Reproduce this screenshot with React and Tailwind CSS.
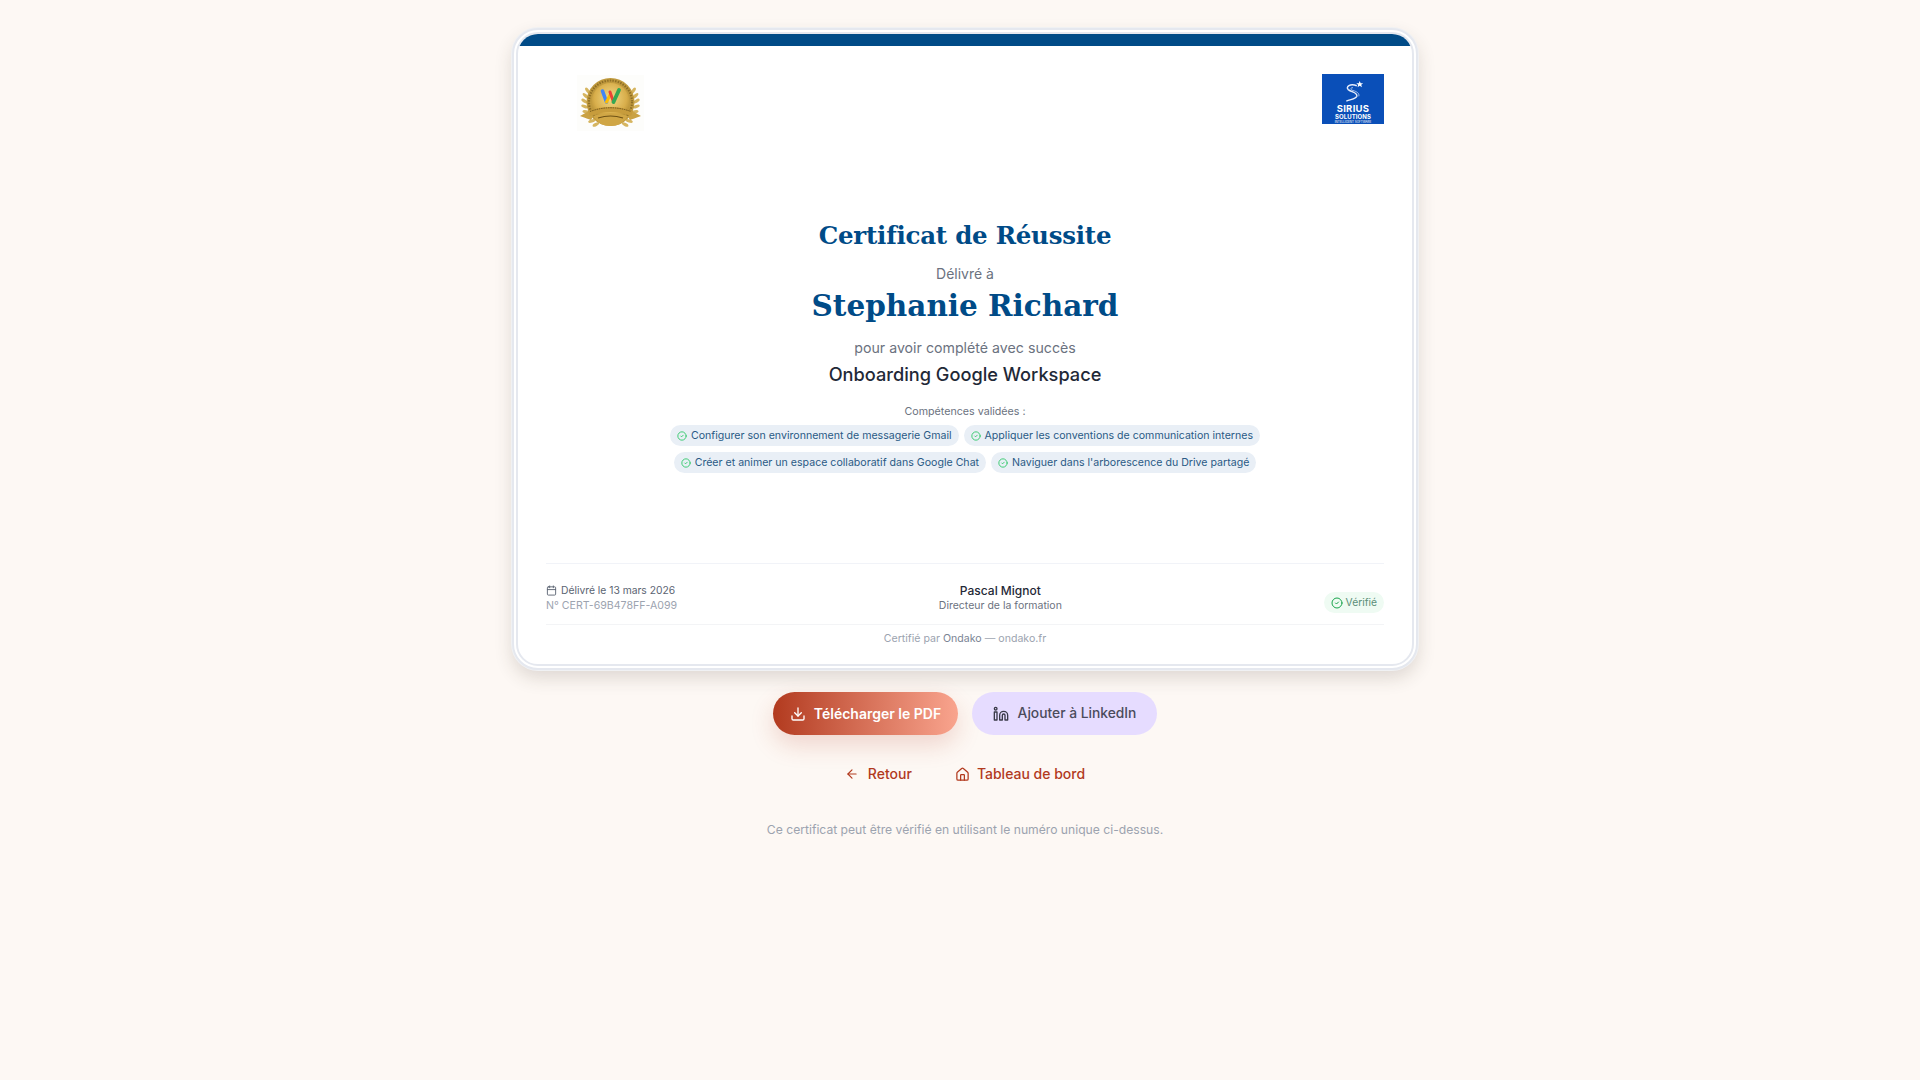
import { ArrowLeft, Calendar, CircleCheck, Download, House, Linkedin } from "lucide-react";

const skills = [
  ["Configurer son environnement de messagerie Gmail", "Appliquer les conventions de communication internes"],
  ["Créer et animer un espace collaboratif dans Google Chat", "Naviguer dans l'arborescence du Drive partagé"],
];

const leaves = [-58, -46, -34, -22, -10, 2, 14, 26];

function Seal() {
  return (
    <svg width="67" height="56" viewBox="0 0 67 56">
      <defs>
        <radialGradient id="gold" cx="50%" cy="40%" r="60%">
          <stop offset="0%" stopColor="#f3d987" />
          <stop offset="70%" stopColor="#d8ae4b" />
          <stop offset="100%" stopColor="#b08a32" />
        </radialGradient>
      </defs>
      <rect width="67" height="56" fill="#fdfdfb" />
      {leaves.map((a) => (
        <g key={a}>
          <ellipse cx="7.5" cy="27" rx="3.6" ry="1.6" fill="#d6b560" transform={`rotate(${a} 33.5 28) rotate(30 7.5 27)`} />
          <ellipse cx="59.5" cy="27" rx="3.6" ry="1.6" fill="#d6b560" transform={`rotate(${-a} 33.5 28) rotate(-30 59.5 27)`} />
        </g>
      ))}
      <circle cx="33.5" cy="27" r="24" fill="#c09a3e" />
      <circle cx="33.5" cy="27" r="21.5" fill="none" stroke="#6f5316" strokeWidth="2.2" strokeDasharray="1.5 1.2" opacity="0.6" />
      <circle cx="33.5" cy="27" r="19" fill="url(#gold)" />
      <path d="M3 41 L12 36 L16 42 L14 45 Z M64 41 L55 36 L51 42 L53 45 Z" fill="#caa244" />
      <path d="M11 36 Q33.5 28 56 36 L54 41 Q33.5 33 13 41Z" fill="#c79c3c" />
      <path d="M13 36.5 Q33.5 29 54 36.5" fill="none" stroke="#5f4713" strokeWidth="1" strokeDasharray="1.5 .8" opacity="0.8" />
      <path d="M16 41 Q33.5 35 51 41 Q45 51 33.5 51 Q22 51 16 41Z" fill="#d0a645" />
      <path d="M21 43 Q33.5 39 46 43" fill="none" stroke="#6f5316" strokeWidth="1.2" />
      <path d="M25.5 16 L29.5 27" stroke="#4285f4" strokeWidth="3.6" strokeLinecap="round" />
      <path d="M29.5 27 L33 20" stroke="#fbbc04" strokeWidth="3" strokeLinecap="round" />
      <path d="M33 17 L36.5 27" stroke="#ea4335" strokeWidth="3" strokeLinecap="round" />
      <path d="M36.5 27 L42 15" stroke="#34a853" strokeWidth="3.8" strokeLinecap="round" />
    </svg>
  );
}

function SiriusLogo() {
  return (
    <div className="w-[62px] h-[50px] bg-[#0a4fb8] flex flex-col items-center text-white">
      <svg width="26" height="24" viewBox="0 0 26 24" className="mt-[6px]" fill="none">
        <path d="M17 6 C10 3 5 7 8 10 C12 13 18 13 17 17 C16 20 11 20 6 22" stroke="#e6edfb" strokeWidth="1.5" />
        <path d="M13 8 C10 8 10 10 13 11 C17 12 20 14 19 17" stroke="#bcd0f2" strokeWidth="0.9" />
        <path d="M20 1 L21 3.4 L23.6 3.4 L21.6 5 L22.3 7.6 L20 6.1 L17.7 7.6 L18.4 5 L16.4 3.4 L19 3.4Z" fill="#fff" />
      </svg>
      <div className="text-[9.5px] font-bold leading-[9px] tracking-[0.03em] mt-[1px]">SIRIUS</div>
      <div className="text-[6px] font-bold leading-[6px] tracking-[0.02em] mt-[1px]">SOLUTIONS</div>
      <div className="text-[3px] leading-[4px]">INTELLIGENT SOFTWARE</div>
    </div>
  );
}

export default function App() {
  return (
    <div className="min-h-screen bg-[#fdf8f4] flex flex-col items-center pt-[28px] pl-[10px] text-[#1f2937]" style={{ fontFamily: "Inter, sans-serif" }}>
      {/* Certificat */}
      <div className="w-[906px] h-[642px] rounded-[26px] bg-white border-2 border-[#e5e8ef] p-[2px] shadow-[0_0_0_1px_#f0f1f3,0_8px_18px_rgba(60,50,40,0.16)]">
        <div className="h-full rounded-[22px] border-2 border-[#e5e8ef] bg-white overflow-hidden flex flex-col">
          <div className="h-[12px] bg-[#004b87] shrink-0" />
          <div className="flex-1 flex flex-col px-[28px]">
            <div className="flex justify-between items-start pt-[28px] h-[120px]">
              <div className="ml-[31px] mt-[1px]"><Seal /></div>
              <SiriusLogo />
            </div>

            <div className="flex flex-col items-center mt-[52px]">
              <h1 className="text-[24.5px] leading-[36px] font-bold text-[#004b87] tracking-[-0.01em]" style={{ fontFamily: '"DejaVu Serif", serif' }}>Certificat de Réussite</h1>
              <p className="text-[14px] leading-[20px] text-[#6b7280] mt-[10px]">Délivré à</p>
              <h2 className="text-[29.5px] leading-[40px] font-bold text-[#004b87] mt-[2px]" style={{ fontFamily: '"DejaVu Serif", serif' }}>Stephanie Richard</h2>
              <p className="text-[14.2px] leading-[20px] text-[#6b7280] mt-[12px]">pour avoir complété avec succès</p>
              <p className="text-[18.2px] leading-[28px] font-medium text-[#1f2937] mt-[2px]">Onboarding Google Workspace</p>
              <p className="text-[10.7px] leading-[16px] text-[#6b7280] mt-[16px]">Compétences validées :</p>
              <div className="flex flex-col items-center gap-[6px] mt-[5px]">
                {skills.map((row, i) => (
                  <div key={i} className="flex gap-[5px]">
                    {row.map((s) => (
                      <span key={s} className="h-[21px] rounded-full bg-[#e9eff6] px-[7px] flex items-center gap-[4px] text-[10.6px] text-[#2a5a85]">
                        <CircleCheck size={10} className="text-[#22c55e]" />
                        {s}
                      </span>
                    ))}
                  </div>
                ))}
              </div>
            </div>

            <div className="mt-auto">
              <div className="border-t border-[#f1f3f8] h-[61px] flex items-end justify-between pb-[10px]">
                <div>
                  <div className="flex items-center gap-[4px] text-[10.3px] leading-[16px] text-[#5b6472]">
                    <Calendar size={11} />
                    Délivré le 13 mars 2026
                  </div>
                  <div className="text-[10.6px] leading-[16px] text-[#9ca3af]">N° CERT-69B478FF-A099</div>
                </div>
                <div className="text-center mb-[1px]">
                  <div className="text-[12px] leading-[16px] font-medium text-[#1f2937]">Pascal Mignot</div>
                  <div className="text-[10.5px] leading-[14px] text-[#6b7280]">Directeur de la formation</div>
                </div>
                <span className="h-[21px] mb-[1px] rounded-full bg-[#effbf3] px-[7px] flex items-center gap-[3px] text-[10.3px] text-[#5b8f78]">
                  <CircleCheck size={12} className="text-[#16a34a]" />
                  Vérifié
                </span>
              </div>
              <div className="border-t border-[#f3f4f6] h-[40px] pt-[6px] text-center text-[10.6px] leading-[16px] text-[#9ca3af]">
                Certifié par <span className="text-[#7b8494]">Ondako</span> — ondako.fr
              </div>
            </div>
          </div>
        </div>
      </div>

      {/* Actions */}
      <div className="flex gap-[14px] mt-[22px]">
        <button className="w-[185px] h-[43px] rounded-full bg-gradient-to-r from-[#b23a1e] to-[#f9a48e] text-white font-semibold text-[14px] flex items-center justify-center gap-[8px] shadow-[0_10px_24px_rgba(178,58,30,0.18)]">
          <Download size={16} />
          Télécharger le PDF
        </button>
        <button className="w-[185px] h-[43px] rounded-full bg-[#e6dcff] text-[#4b4b5c] font-medium text-[13.8px] flex items-center justify-center gap-[9px]">
          <Linkedin size={16} className="text-[#3a3a48]" />
          Ajouter à LinkedIn
        </button>
      </div>

      <div className="flex gap-[43px] mt-[29px] text-[14px] leading-[20px] font-medium text-[#b23a1e]">
        <a className="flex items-center gap-[9px]"><ArrowLeft size={14} />Retour</a>
        <a className="flex items-center gap-[7px]"><House size={15} />Tableau de bord</a>
      </div>

      <p className="text-[12.15px] leading-[16px] text-[#9ca3af] mt-[38px]">Ce certificat peut être vérifié en utilisant le numéro unique ci-dessus.</p>
    </div>
  );
}
